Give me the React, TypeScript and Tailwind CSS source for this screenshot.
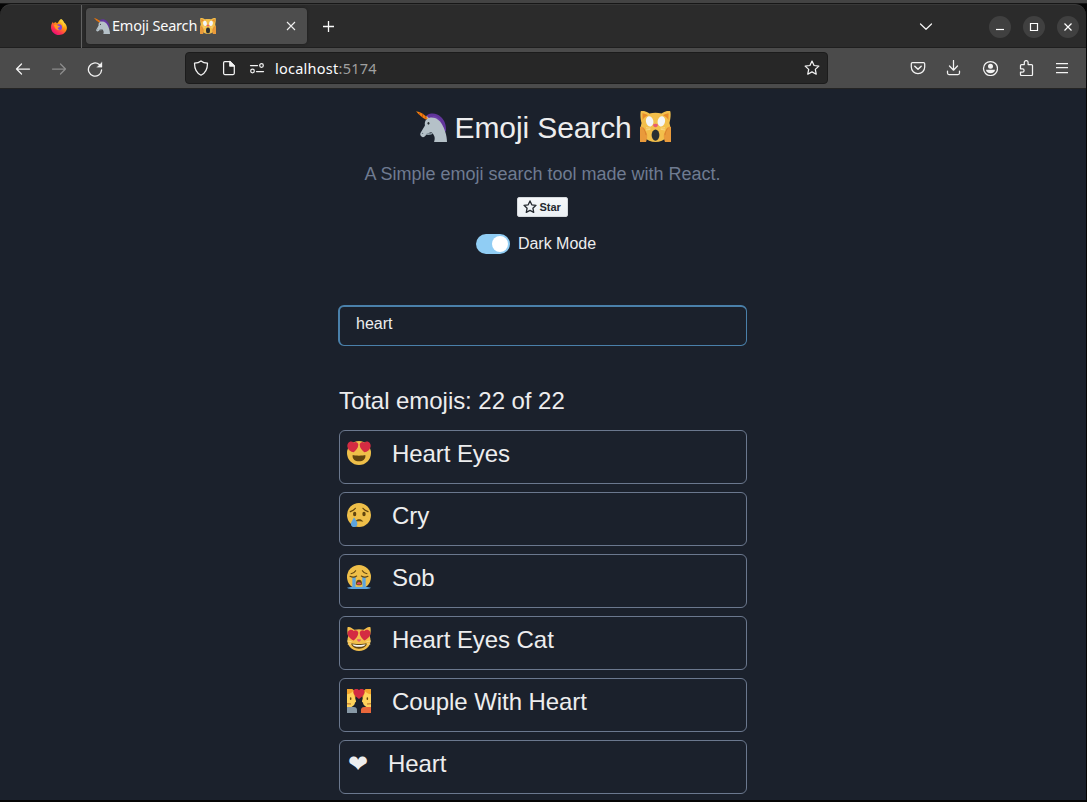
import React from "react";

type IconProps = { className?: string };

function Unicorn({ className }: IconProps) {
  return (
    <svg viewBox="0 0 36 36" className={className}>
      <path fill="#61359b" d="M13 4.5C18 1.5 25 2.500 29 7c4 4 6.500 9 5.800 17L27 19l-8-9-7-3z" />
      <path fill="#6d3fa8" d="M19 6c5-1 9 3 10.500 8L33 21l-5-3-7-9z" />
      <path fill="#b5c1c8" d="M12 5.200l3 3c6-2 12 1.500 15.300 7.500C33 20.500 36 28 36 36H21c1.800-5 .4-8-3.200-11.200-2 .7-4 .6-5.400 2.200-1.400 2-3.600 4.300-5.600 3-2.300-1.300-2.400-3.500-.9-5.500l4.500-7.700c-.7-3.500.4-5.800 2-7.300z" />
      <path fill="#94a4ad" d="M11 27l2.500-1.500c2 .8 5 .4 6.500-.5l-2 2.200c-2.500.8-5 .8-7-.2z" />
      <ellipse cx="14.500" cy="14.300" rx="1.100" ry="1.600" fill="#292f33" />
      <circle cx="7.600" cy="26" r=".8" fill="#66757f" />
      <path fill="#f4800c" d="M0 .2c5 .7 10 3.800 14 8.100L11.300 10C7.500 7.500 3.300 4 0 .2z" />
      <path stroke="#b94a14" strokeWidth="1" d="M4.500 1.700l-.6 2.400M8 3.300L7.200 7M11.500 6l-1.200 3" />
    </svg>
  );
}

function WearyCat({ className }: IconProps) {
  return (
    <svg viewBox="0 0 36 36" className={className}>
      <path fill="#f3bf4b" d="M1 0c2-1 7 .7 10 3 4.500-1.300 9.500-1.300 14 0 3-2.300 8-4 10-3 1.200 3 .3 10-.8 14C36 20 36 25 32 29.500 28 34 23 36 18 36S8 34 4 29.500C0 25 0 20 1.800 14 .6 10 0 3 1 0z" />
      <path fill="#e78b2b" d="M2.800 2.500c2.200.3 4.500 1.200 6.500 2.400C6.500 6.200 4.300 8 3 10.500zM33.200 2.500c-2.200.3-4.500 1.200-6.500 2.400 2.800 1.300 5 3.100 6.300 5.600z" />
      <ellipse cx="11.200" cy="12" rx="4.300" ry="6" transform="rotate(-12 11.200 12)" fill="#f3f5f6" />
      <ellipse cx="24.800" cy="12" rx="4.300" ry="6" transform="rotate(12 24.800 12)" fill="#f3f5f6" />
      <path fill="#e75a70" d="M15.200 15.700c1.200-1 4.400-1 5.600 0 .4 1.700-1.500 3.300-2.800 3.300s-3.200-1.600-2.800-3.300z" />
      <ellipse cx="18" cy="28" rx="4.500" ry="6.500" fill="#292f33" />
      <path fill="#e99a3b" d="M0 18.500c3-1 5.500 1 6.200 4.300L8 26c1 3 0 7-1 10H0zM36 18.500c-3-1-5.500 1-6.200 4.300L28 26c-1 3 0 7 1 10h7z" />
      <path d="M3.500 20c2 2 3 4.500 3.500 8M32.500 20c-2 2-3 4.500-3.500 8" stroke="#d57b27" strokeWidth=".8" fill="none" />
      <path d="M7 19.500l5 .5M29 19.500l-5 .5M7 22l5-.7M29 22l-5-.7" stroke="#fce29a" strokeWidth=".8" />
    </svg>
  );
}

function HeartEyes({ className }: IconProps) {
  return (
    <svg viewBox="0 0 36 36" className={className}>
      <circle cx="18" cy="18" r="18" fill="#efbf49" />
      <path fill="#61450f" d="M8.500 21c3 1.300 16 1.300 19 0 1 6-3.700 9.500-9.500 9.500S7.500 27 8.500 21z" />
      <path fill="#d42b42" d="M16.700 4.300c-.9-2.900-4.500-4-6.800-1.800C7.600-.3 3.300.6 1.600 3.300-.6 6.800.7 11 3.400 13.800 5.500 15.800 8 16.500 10 17c3.600-3 7.800-7.600 6.700-12.700zM19.300 4.300c.9-2.900 4.500-4 6.800-1.800C28.400-.3 32.700.6 34.400 3.300c2.200 3.500.9 7.700-1.800 10.500-2.100 2-4.600 2.700-6.600 3.200-3.600-3-7.800-7.600-6.700-12.700z" />
    </svg>
  );
}

function Cry({ className }: IconProps) {
  return (
    <svg viewBox="0 0 36 36" className={className}>
      <circle cx="18" cy="18" r="18" fill="#efbf49" />
      <ellipse cx="11.500" cy="16.500" rx="2.500" ry="3.500" fill="#61450f" />
      <ellipse cx="25.500" cy="16.500" rx="2.500" ry="3.500" fill="#61450f" />
      <path d="M5 13c2-.8 5-2 7.500-5M31.500 13c-2-.8-5-2-7.500-5" stroke="#61450f" strokeWidth="1.800" fill="none" strokeLinecap="round" />
      <path d="M13 27.500c2.500-3.500 8-3.500 10.500 0-3-1-7.500-1-10.500 0z" fill="#61450f" stroke="#61450f" strokeLinejoin="round" />
      <path fill="#5ba4df" d="M10.500 21.500c2 4 5.500 6.200 5 10.200-.4 3-2.500 4.300-4.900 4.300-2.600 0-4.600-1.600-4.700-4.300-.1-3.600 2.800-5.400 4.600-10.200z" />
    </svg>
  );
}

function Sob({ className }: IconProps) {
  return (
    <svg viewBox="0 0 36 36" className={className}>
      <circle cx="18" cy="18" r="18" fill="#efbf49" />
      <path fill="#5ba4df" d="M8 18h5v14.500h10V18h5v14.500c3 .5 6 .7 8 1.500-2 1.500-6 2-9 2H9c-3 0-7-.5-9-2 2-.8 5-1 8-1.500z" />
      <path fill="#efbf49" d="M13 29h10v3.500H13z" />
      <path d="M6 13c3-.5 5.500-2 7-4.500M30 13c-3-.5-5.500-2-7-4.500M4.500 17c3 1.500 7 1.500 10-.5M31.500 17c-3 1.500-7 1.500-10-.5" stroke="#61450f" strokeWidth="1.600" fill="none" strokeLinecap="round" />
      <path fill="#61450f" d="M13.500 28c0-4 1.800-6 4.500-6s4.500 2 4.500 6c0 3-9 3-9 0z" />
      <path fill="#dd4964" d="M14.500 28c.5-3 6.500-3 7 0-.5 1.700-6.500 1.700-7 0z" />
    </svg>
  );
}

function HeartEyesCat({ className }: IconProps) {
  return (
    <svg viewBox="0 0 36 36" className={className}>
      <path fill="#f3bf4b" d="M1 0c3-.5 7 2 10 4.200 4.500-1.200 9.500-1.200 14 0C28 2 32-.5 35 0c1.200 4 .3 10-.8 14C36 20 36 25 32 29.500 28 34 23 36 18 36S8 34 4 29.500C0 25 0 20 1.800 14 .6 10 0 4 1 0z" />
      <path fill="#61450f" d="M6 24c5 2.200 19 2.200 24 0-.5 5-5.500 8.500-12 8.500S6.500 29 6 24z" />
      <path fill="#f5f6f3" d="M8 26c5 1.400 15 1.400 20 0-1 2.800-5 3.800-10 3.800S9 28.800 8 26z" />
      <path fill="#e75a70" d="M15 18.500h6c0 2-1.700 3.500-3 3.500s-3-1.500-3-3.500z" />
      <path d="M0 21l7 1M1 26l6-1M36 21l-7 1M35 26l-6-1" stroke="#fce29a" />
      <path fill="#d42b42" d="M16.700 7.700c-.9-2.900-4.500-4-6.800-1.800-2.300-2.800-6.600-1.900-8.300.8-2 3.500-.5 8.500 8.400 13.500 3.600-3 7.800-7.400 6.700-12.500zM19.300 7.700c.9-2.900 4.500-4 6.800-1.800 2.300-2.800 6.600-1.900 8.300.8 2 3.500.5 8.500-8.400 13.500-3.600-3-7.800-7.400-6.700-12.500z" />
    </svg>
  );
}

function Couple({ className }: IconProps) {
  return (
    <svg viewBox="0 0 36 36" className={className}>
      <path fill="#f4a52d" d="M0 0h8c5 4 6 9 4 15L0 18zM36 0h-8c-5 4-6 9-4 15l12 3z" />
      <path fill="#ffd35b" d="M0 8c4-.5 7-2 8.500-4.500L12 13l1.500 5c.3 1.300-.5 2-1.500 2.200C11.500 25 7 28 0 28zM36 8c-4-.5-7-2-8.500-4.500L24 13l-1.500 5c-.3 1.300.5 2 1.500 2.200.5 4.800 5 7.800 12 7.800z" />
      <path fill="#8899a6" d="M0 27h10c4 0 5 2.500 5 5v4H0z" />
      <path fill="#e9673b" d="M36 27H26c-4 0-5 2.500-5 5v4h15z" />
      <path d="M5.500 13.500v2M30.500 13.500v2" stroke="#61450f" strokeWidth="2.200" strokeLinecap="round" />
      <path d="M0 22l6 .5M36 22l-6 .5" stroke="#b56c2a" strokeWidth="1.600" />
      <path fill="#d42b42" d="M26.200 3.600C25.500-.8 20-1.600 18 2 16-1.600 10.500-.8 9.800 3.600 9.200 8 14 12 18 15c4-3 8.800-7 8.200-11.400z" />
    </svg>
  );
}

function Firefox() {
  return (
    <svg viewBox="0 0 16 16" className="block size-4">
      <defs>
        <linearGradient id="flame" x1="0.85" y1="0.05" x2="0.2" y2="0.95">
          <stop offset="0" stopColor="#fff34f" />
          <stop offset=".4" stopColor="#ff980e" />
          <stop offset=".72" stopColor="#ff3750" />
          <stop offset="1" stopColor="#eb0878" />
        </linearGradient>
      </defs>
      <path fill="url(#flame)" d="M10 0c2 1 2.600 2.300 3 3.500 1 .4 3 3 2.900 5.500C15.700 13.200 12 16 8 16c-4.300 0-8-3.400-8-7.800C0 6 .6 4.300 2 2.700l.4 1.800C3.200 3.600 4 3.300 5 3.300L6 4.500c1.500-1 2-3.500 4-4.500z" />
      <circle cx="8" cy="8.300" r="3" fill="#7e44dc" />
      <path fill="#ff9a20" d="M2.800 6c1.700-.7 3-.4 4.400.8L9 7.200c-.2.9-1.300 1-2 1.400-.4 1.200.3 2 1.700 2.200-2 1-4.700-.2-5.900-4.800z" />
      <path fill="#ffcf35" d="M9.200 2.500c2.400 1.200 3.600 3 3.400 6 1-1.500 1-3.700.2-5L10.500.5z" />
    </svg>
  );
}

type LineProps = { children: React.ReactNode; className?: string };
function Line({ children, className = "text-[#f3f3f3]" }: LineProps) {
  return (
    <svg viewBox="0 0 16 16" fill="none" stroke="currentColor" strokeWidth="1.25" strokeLinecap="round" strokeLinejoin="round" className={`block size-4 shrink-0 ${className}`}>
      {children}
    </svg>
  );
}

const STAR = "M8 1.100l2.050 4.400 4.800.6-3.550 3.300.95 4.800L8 11.850 3.750 14.200l.95-4.800L1.150 6.100l4.800-.6z";

function TabBar() {
  return (
    <div className="flex h-[44px] w-[1086px] rounded-t-[11px] border-t border-[#383838] bg-[#2b2b2b] shadow-[inset_0_-1px_0_#1f1f1f]">
      <div className="flex w-[82px] shrink-0 items-center border-r border-[#626262] pl-[51px]">
        <Firefox />
      </div>
      <div className="mt-[3px] ml-1 flex h-9 w-[221px] shrink-0 items-center rounded-[4px] bg-[#4d4d4d] pr-2 pl-2 shadow-[0_0_3px_#1b1b1b]">
        <Unicorn className="block size-4 shrink-0" />
        <span className="ml-[2px] w-[86px] text-[14.5px] tracking-[-0.2px] whitespace-nowrap text-[#fbfbfb]">Emoji Search</span>
        <WearyCat className="ml-[2px] block size-4 shrink-0" />
        <svg viewBox="0 0 16 16" className="ml-auto block size-4" stroke="#f0f0f0" strokeWidth="1.100">
          <path d="M4 4l8 8M12 4l-8 8" />
        </svg>
      </div>
      <div className="flex h-[43px] w-[43px] items-center justify-center">
        <svg viewBox="0 0 16 16" className="size-4" stroke="#fafafa" strokeWidth="1.300">
          <path d="M2 7.500h11M7.500 2v11" />
        </svg>
      </div>
      <div className="ml-auto flex items-center pr-[7px]">
        <div className="mr-[55px]">
          <Line><path d="M2.500 5l5.500 5.300L13.500 5" /></Line>
        </div>
        <div className="flex gap-3">
          {["M4 10.500h8", "M4.500 4.500h7v7h-7z", "M4.500 4.500l7 7M11.500 4.500l-7 7"].map((d) => (
            <div key={d} className="flex size-[22px] items-center justify-center rounded-full bg-[#404040]">
              <svg viewBox="0 0 16 16" className="size-4" fill="none" stroke="#fff" strokeWidth="1.200"><path d={d} /></svg>
            </div>
          ))}
        </div>
      </div>
    </div>
  );
}

function Toolbar() {
  return (
    <div className="flex h-[41px] w-[1086px] items-center border-b border-[#242424] bg-[#4b4b4b]">
      <div className="flex w-[185px] shrink-0 gap-5 pt-px pl-[15px]">
        <Line><path d="M1.500 8H14.500M6.500 3L1.500 8l5 5" /></Line>
        <Line className="text-[#8c8c8c]"><path d="M1.500 8h13M9.500 3l5 5-5 5" /></Line>
        <Line><path d="M14.600 9A6.600 6.600 0 1 1 12.300 3.500" strokeWidth="1.300" /><path d="M15 1.200v5h-5z" fill="currentColor" strokeWidth=".3" /></Line>
      </div>
      <div className="flex h-8 w-[643px] shrink-0 items-center rounded-[4px] border border-[#1c1c1c] bg-[#272727] px-[7px]">
        <Line><path d="M8 .9c2 1.600 4.200 2.100 6.500 2.300 0 5.200-1.700 9.700-6.500 12C3.200 12.900 1.500 8.400 1.500 3.200 3.800 3 6 2.500 8 .9z" /></Line>
        <div className="ml-3"><Line><path d="M3.800 1.500h5l4.500 4.500v7.300a1.200 1.200 0 0 1-1.200 1.200H3.800a1.200 1.200 0 0 1-1.200-1.200V2.700a1.200 1.200 0 0 1 1.200-1.200z" /><path d="M8.800 1.500V6h4.500z" fill="currentColor" /></Line></div>
        <div className="ml-3"><Line><path d="M1.500 5.500h7M7.500 11.500h7" /><circle cx="12.500" cy="5.500" r="1.800" /><circle cx="3.500" cy="11" r="1.800" /></Line></div>
        <span className="mt-px ml-[10px] text-[14.5px] tracking-[0.25px] text-[#a0a0a0]"><span className="text-[#fbfbfe]">localhost</span>:5174</span>
        <div className="ml-auto"><Line><path d={STAR} /></Line></div>
      </div>
      <div className="ml-auto flex gap-5 pr-4">
        <Line><path d="M2.500 2.500h11c.7 0 1.200.5 1.200 1.200V7A6.700 6.700 0 0 1 1.300 7V3.700c0-.7.5-1.200 1.200-1.200z" /><path d="M4.800 6.200L8 9.200l3.200-3" strokeWidth="1.500" /></Line>
        <Line><path d="M7.500.5V10M3.500 6l4 4.200 4-4.200M1.500 11v2c0 1 .5 1.500 1.500 1.500h9c1 0 1.500-.5 1.500-1.500v-2" /></Line>
        <Line><circle cx="8.500" cy="8.500" r="7" /><circle cx="8.500" cy="6.300" r="2.500" fill="currentColor" stroke="none" /><path d="M4 9.800h9c0 2-2 3.500-4.500 3.500S4 11.800 4 9.800z" fill="currentColor" stroke="none" /></Line>
        <Line><path d="M6.300 4.500V2.500a1.900 1.900 0 0 1 3.800 0v2h3.400a1 1 0 0 1 1 1v9a1 1 0 0 1-1 1h-10a1 1 0 0 1-1-1V12h2a1.600 1.600 0 0 0 0-3.200h-2V5.500a1 1 0 0 1 1-1z" /></Line>
        <Line><path d="M2 3.500h12M2 7.500h12M2 12.500h12" strokeLinecap="butt" /></Line>
      </div>
    </div>
  );
}

const results = [
  { name: "Heart Eyes", Icon: HeartEyes },
  { name: "Cry", Icon: Cry },
  { name: "Sob", Icon: Sob },
  { name: "Heart Eyes Cat", Icon: HeartEyesCat },
  { name: "Couple With Heart", Icon: Couple },
  { name: "Heart", Icon: null },
];

export default function App() {
  return (
    <div className="h-[802px] w-[1087px] overflow-hidden bg-[#050505] font-['Noto_Sans',sans-serif]">
      <div className="h-[3px] bg-[#434343]" />
      <div className="h-px bg-[#161616]" />
      <TabBar />
      <Toolbar />
      <main className="flex h-[711px] w-[1086px] flex-col items-center bg-[#1b212c] font-['Liberation_Sans',sans-serif] text-[#ededee]">
        <h1 className="mt-[19px] flex h-10 items-center text-[30px] leading-10 whitespace-nowrap">
          <Unicorn className="mb-[3px] block size-[31px]" />
          <span className="mr-[7px] ml-2 w-[178px] tracking-[-0.1px]">Emoji Search</span>
          <WearyCat className="mb-[3px] block size-[31px]" />
        </h1>
        <p className="mt-[13px] mr-px h-[27px] text-[18px] leading-[27px] text-[#6f7b91]">A Simple emoji search tool made with React.</p>
        <button className="mt-[9px] mr-[2px] flex h-5 w-[51px] items-center rounded-[2px] border border-[#d5d9dd] bg-gradient-to-b from-[#f6f8fa] to-[#ebf0f4] pl-[5px] text-[11px] font-bold text-[#24292f]">
          <svg viewBox="0 0 16 16" className="block size-[14px]" fill="none" stroke="#24292f" strokeWidth="1.500" strokeLinejoin="round"><path d={STAR} /></svg>
          <span className="mb-px ml-[3px] leading-4">Star</span>
        </button>
        <div className="mt-[15px] mr-[14px] flex h-6 items-center">
          <div className="flex h-5 w-[34px] items-center justify-end rounded-full bg-[#90cdf4] pr-[2px]">
            <div className="size-4 rounded-full bg-white" />
          </div>
          <span className="ml-2 text-[16px]">Dark Mode</span>
        </div>
        <div className="w-[408px]">
          <div className="mt-[49px] -ml-px h-[41px] w-[409px] rounded-[6px] border border-t-2 border-l-2 border-[#4a80aa] pl-4 text-[16px] leading-[33px]">heart</div>
          <h2 className="mt-[37px] h-9 text-[24px] leading-9 tracking-[-0.05px]">Total emojis: 22 of 22</h2>
          <div className="mt-[11px] flex flex-col gap-2">
            {results.map(({ name, Icon }) => (
              <div key={name} className="flex h-[54px] items-start rounded-[6px] border border-[#6b788e] pt-[9px] pl-[7px] text-[24px]">
                {Icon ? <Icon className="mt-px mr-[21px] block size-6 shrink-0" /> : <span className="mr-5 ml-px w-5 font-['DejaVu_Sans'] leading-7">{"❤\uFE0E"}</span>}
                <span className="leading-7 tracking-[-0.07px]">{name}</span>
              </div>
            ))}
          </div>
        </div>
      </main>
    </div>
  );
}
